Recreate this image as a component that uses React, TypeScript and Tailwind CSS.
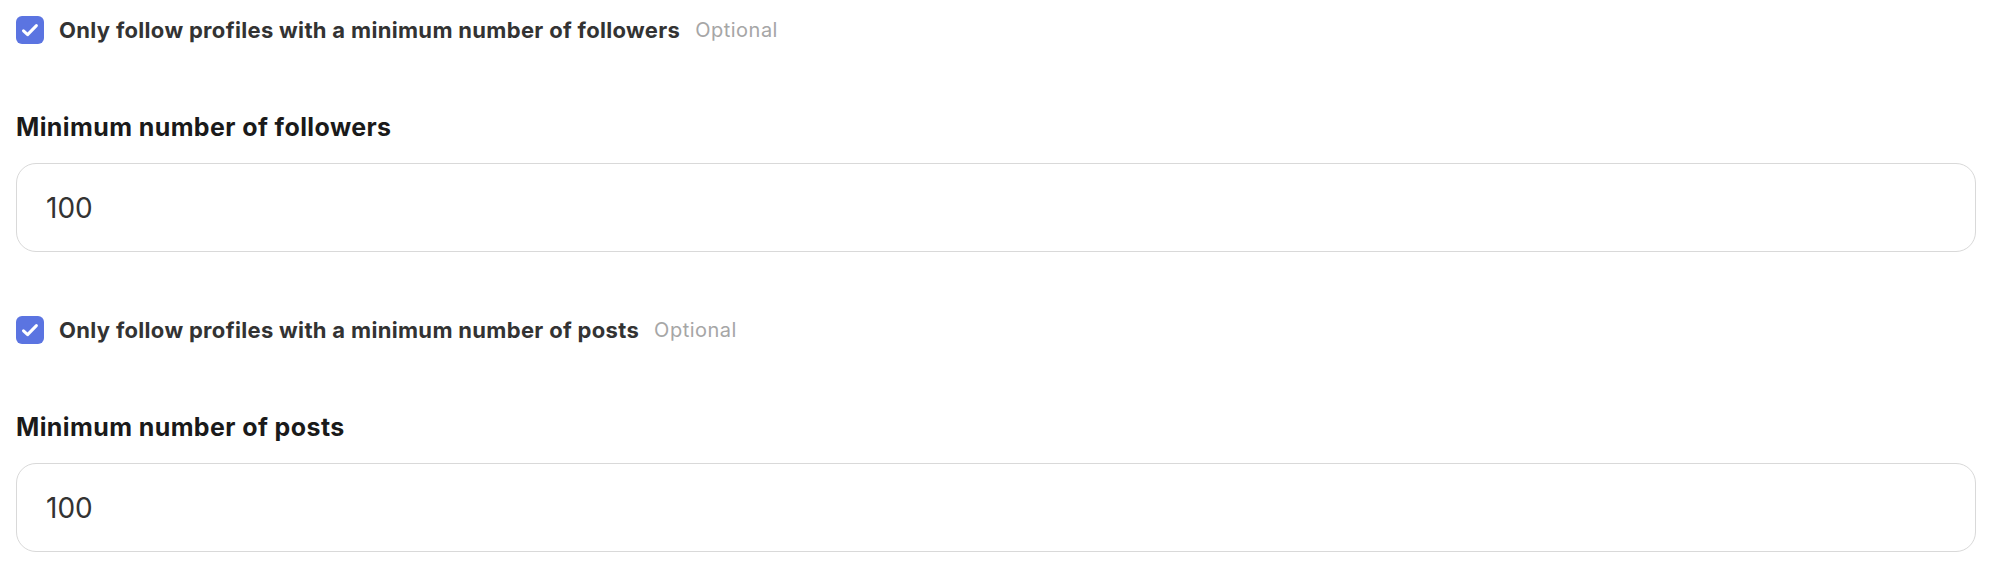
import React from "react";

function Check() {
  return (
    <div className="w-[28px] h-[28px] rounded-[6px] bg-[#5b74e1] shrink-0">
      <svg width="28" height="28" viewBox="0 0 28 28" fill="none">
        <path d="M7.5 14.8 L11.6 18.6 L20.4 9.6" stroke="white" strokeWidth="3" strokeLinecap="round" strokeLinejoin="round" />
      </svg>
    </div>
  );
}

function Section({ check, label, value }: { check: string; label: string; value: string }) {
  return (
    <div className="flex flex-col">
      <div className="flex items-center h-[28px]">
        <Check />
        <span className="ml-[15px] text-[22px] font-bold text-[#333333] tracking-[0.32px]">{check}</span>
        <span className="ml-[15px] text-[20px] text-[#a6a6a6] tracking-[0.5px]">Optional</span>
      </div>
      <div className="mt-[67px] h-[32px] leading-[32px] text-[25px] font-bold text-[#1a1a1a] tracking-[0.4px]">{label}</div>
      <div className="mt-[20px] h-[89px] rounded-[20px] border border-[#d9d9d9] flex items-center pl-[29px] text-[28px] text-[#333333]">
        {value}
      </div>
    </div>
  );
}

export default function App() {
  return (
    <div className="w-[2013px] h-[588px] bg-white pl-[16px] pr-[37px] pt-[16px] font-['Inter',sans-serif] flex flex-col gap-[64px]">
      <Section check="Only follow profiles with a minimum number of followers" label="Minimum number of followers" value="100" />
      <Section check="Only follow profiles with a minimum number of posts" label="Minimum number of posts" value="100" />
    </div>
  );
}
